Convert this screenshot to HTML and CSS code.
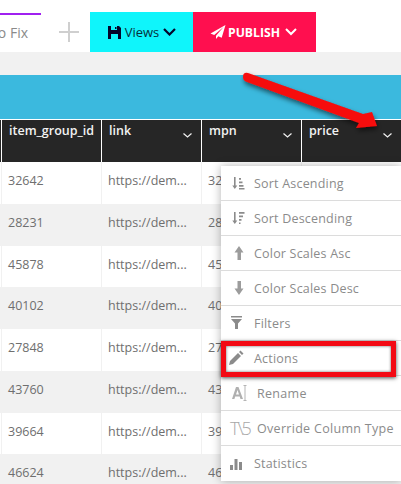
FILE: index.html
```html
<!DOCTYPE html>
<html lang="en">
<head>
    <meta charset="UTF-8">
    <meta name="viewport" content="width=device-width, initial-scale=1.0">
    <title>Feed columns</title>
    <link rel="stylesheet" href="styles.css">
</head>
<body>
    <div class="topbar">
        <div class="tab"><span>Auto Fix</span></div>
        <div class="add-tab"></div>
        <button class="btn btn-views">
            <svg width="13" height="13" viewBox="0 0 13 13"><path fill="#05052a" d="M0 0h11l2 2v11H0z"/><path fill="#0ff5fb" d="M3 0h6v4H3zM3 8h7v5H3z"/><path fill="#05052a" d="M7 1h1.500v2H7z"/></svg>
            <span>Views</span>
            <svg width="13" height="8" viewBox="0 0 13 8"><path fill="none" stroke="#05052a" stroke-width="2.200" d="M1 1l5.500 5.500L12 1"/></svg>
        </button>
        <button class="btn btn-publish">
            <svg width="16" height="14" viewBox="0 0 15 14"><path fill="#fff" d="M15 0L0 8.500l3.700 1.400L13 2 5.500 10.700V14l2.300-2.700 3.400 1.400z"/></svg>
            <span>PUBLISH</span>
            <svg width="12" height="8" viewBox="0 0 12 8"><path fill="none" stroke="#fff" stroke-width="2" d="M1 1l5 5 5-5"/></svg>
        </button>
    </div>
    <div class="greybar"></div>
    <div class="bluebar"></div>

    <div class="table">
        <div class="row head">
            <div class="sliver"></div>
            <div class="th">item_group_id</div>
            <div class="th">link<svg class="caret" width="9" height="5" viewBox="0 0 9 5"><path d="M.5.500L4.500 4 8.500.500"/></svg></div>
            <div class="th">mpn<svg class="caret" width="9" height="5" viewBox="0 0 9 5"><path d="M.5.500L4.500 4 8.500.500"/></svg></div>
            <div class="th">price<svg class="caret" width="9" height="5" viewBox="0 0 9 5"><path d="M.5.500L4.500 4 8.500.500"/></svg></div>
        </div>
        <div class="row"><div class="sliver"></div><div class="td">32642</div><div class="td">https://dem...</div><div class="td">32642</div><div class="td"></div></div>
        <div class="row"><div class="sliver"></div><div class="td">28231</div><div class="td">https://dem...</div><div class="td">28231</div><div class="td"></div></div>
        <div class="row"><div class="sliver"></div><div class="td">45878</div><div class="td">https://dem...</div><div class="td">45878</div><div class="td"></div></div>
        <div class="row"><div class="sliver"></div><div class="td">40102</div><div class="td">https://dem...</div><div class="td">40102</div><div class="td"></div></div>
        <div class="row"><div class="sliver"></div><div class="td">27848</div><div class="td">https://dem...</div><div class="td">27848</div><div class="td"></div></div>
        <div class="row"><div class="sliver"></div><div class="td">43760</div><div class="td">https://dem...</div><div class="td">43760</div><div class="td"></div></div>
        <div class="row"><div class="sliver"></div><div class="td">39664</div><div class="td">https://dem...</div><div class="td">39664</div><div class="td"></div></div>
        <div class="row"><div class="sliver"></div><div class="td">46624</div><div class="td">https://dem...</div><div class="td">46624</div><div class="td"></div></div>
    </div>

    <div class="menu">
        <div class="item">
            <svg class="icon" width="16" height="16" viewBox="0 0 16 16"><path d="M4 2h1.600v8.500h1.700L4.800 14 2.300 10.500H4zM9 3h2v1.800H9zM9 6.500h3.500v1.800H9zM9 10h4.500v1.800H9zM9 13h5.500v1.400H9z"/></svg>
            <span>Sort Ascending</span>
        </div>
        <div class="item">
            <svg class="icon" width="16" height="16" viewBox="0 0 16 16"><path d="M4 2h1.600v8.500h1.700L4.800 14 2.300 10.500H4zM9 2h5.500v1.800H9zM9 5.500h4v1.800H9zM9 9h2.500v1.800H9zM9 12.500h1.500v1.500H9z"/></svg>
            <span>Sort Descending</span>
        </div>
        <div class="item">
            <svg class="icon icon-soft" width="16" height="16" viewBox="0 0 16 16"><path d="M9 1l4.500 6.500H11V15H7.500V7.500h-3z"/></svg>
            <span>Color Scales Asc</span>
        </div>
        <div class="item">
            <svg class="icon icon-soft" width="16" height="16" viewBox="0 0 16 16"><path d="M7.500 1H11v7.500h2.500L9 15 4.500 8.500h3z"/></svg>
            <span>Color Scales Desc</span>
        </div>
        <div class="item">
            <svg class="icon" width="16" height="16" viewBox="0 0 16 16"><path d="M1 1h11v1.500H1zM1 4h11L8 8.500V14H5V8.500z"/></svg>
            <span>Filters</span>
        </div>
        <div class="item">
            <svg class="icon icon-pencil" width="16" height="16" viewBox="0 0 16 16"><path d="M1 15l1-4 8-8 3 3-8 8zM11 2l1.500-1.500 3 3L14 5z"/></svg>
            <span>Actions</span>
            <div class="highlight"></div>
        </div>
        <div class="item item-wide">
            <svg class="icon icon-rename" width="19" height="18" viewBox="0 0 19 18"><path d="M6 3h2.500L13 15h-2.500l-.8-2.500H5.200L4.400 15H2zM6 10.500h3L7.500 6z"/><path fill="none" stroke="#b5b5b5" d="M13.500 1.500h3M15 1.500v15M13.500 16.500h3"/></svg>
            <span>Rename</span>
        </div>
        <div class="item item-wide">
            <span class="type-icon">T\5</span>
            <span>Override Column Type</span>
        </div>
        <div class="item">
            <svg class="icon" width="16" height="16" viewBox="0 0 16 16"><path d="M0 9h3v5H0zM4.500 3h3v11h-3zM9 6h3v8H9z"/></svg>
            <span>Statistics</span>
        </div>
    </div>

    <svg class="arrow" width="150" height="70" viewBox="0 0 150 70">
        <defs>
            <filter id="soft" x="-10%" y="-30%" width="125%" height="170%">
                <feDropShadow dx="1" dy="3" stdDeviation="2.500" flood-color="#000" flood-opacity=".55"/>
            </filter>
        </defs>
        <path filter="url(#soft)" fill="#f60b0b" d="M3 6Q3 1 8 2L123 43 132 41 137 55 116 57 119 52 7 11Q3 10 3 6z"/>
    </svg>
</body>
</html>
```

FILE: styles.css
```css
* {
    box-sizing: border-box;
}
html, body {
    height: 100%;
}
body {
    margin: 0;
    overflow: hidden;
    position: relative;
    background: #fff;
    font-family: "Open Sans", sans-serif;
    color: #6f6f6f;
}
.topbar {
    height: 52px;
    padding-top: 12px;
    display: flex;
    align-items: stretch;
    background: #fff;
}
.tab {
    width: 41px;
    height: 40px;
    margin-top: 1px;
    border-top: 2px solid #a020f0;
    display: flex;
    justify-content: flex-end;
    padding: 8px 13px 0 0;
    font-size: 14px;
    color: #8a8a8a;
    white-space: nowrap;
}
.add-tab {
    width: 20px;
    height: 20px;
    margin: 10px 11px 0 18px;
    background:
        linear-gradient(#cfcfcf, #cfcfcf) center / 100% 2px no-repeat,
        linear-gradient(#cfcfcf, #cfcfcf) center / 2px 100% no-repeat;
}
.btn {
    border: none;
    padding: 0;
    display: flex;
    align-items: center;
    justify-content: center;
    font-family: "Open Sans", sans-serif;
}
.btn-views {
    width: 103px;
    padding-left: 1px;
    gap: 4px;
    background: #0ff5fb;
    color: #05303a;
    font-size: 13px;
}
.btn-publish {
    width: 123px;
    padding-right: 2px;
    gap: 2px;
    background: #ff0f4f;
    color: #fff;
    font-size: 12.200px;
    font-weight: 700;
}
.btn-publish span {
    margin-right: 3px;
}
.greybar {
    height: 23px;
    background: #f1f1f1;
}
.bluebar {
    height: 45px;
    background: #3bb9de;
    border-bottom: 1px solid #fff;
}
.table {
    display: flex;
    flex-direction: column;
}
.row {
    display: grid;
    grid-template-columns: 1px repeat(4, 100px);
    height: 41.750px;
    background: #fff;
}
.row:nth-child(odd) {
    background: #f1f1f1;
}
.row.head {
    height: 43px;
    background: #262626;
    margin-top: -1px;
    border-top: 1px solid #fff;
}
.sliver {
    background: transparent;
}
.head .sliver {
    background: #262626;
}
.th {
    position: relative;
    border-left: 1px solid #fff;
    padding: 1px 0 0 7px;
    font-size: 12.500px;
    line-height: 19px;
    font-weight: 600;
    color: #f2f2f2;
    white-space: nowrap;
    overflow: hidden;
}
.caret {
    position: absolute;
    right: 9px;
    top: 13px;
    fill: none;
    stroke: #f2f2f2;
    stroke-width: 1.200;
}
.td {
    border-left: 1px solid #f1f1f1;
    padding: 10px 0 0 6px;
    font-size: 12.500px;
    line-height: 18px;
    color: #6f6f6f;
    white-space: nowrap;
    overflow: hidden;
}
.menu {
    position: absolute;
    left: 221px;
    top: 166px;
    width: 180px;
    background: #fff;
    box-shadow: 0 0 9px rgba(0, 0, 0, .3);
}
.item {
    position: relative;
    height: 35px;
    padding-left: 9px;
    display: flex;
    align-items: center;
    gap: 8px;
    border-bottom: 1px solid #dcdcdc;
    font-size: 12.500px;
    letter-spacing: .2px;
    color: #8b8b8b;
    white-space: nowrap;
}
.item:last-child {
    border-bottom: none;
}
.item-wide {
    gap: 8px;
    letter-spacing: .3px;
}
.icon {
    flex: none;
    fill: #8b8b8b;
}
.icon-soft {
    fill: #9c9c9c;
}
.icon-pencil {
    margin-left: -2px;
    margin-right: 2px;
}
.icon-rename {
    fill: #b0b0b0;
}
.type-icon {
    flex: none;
    width: 19px;
    font-size: 18px;
    font-weight: 300;
    letter-spacing: -2px;
    color: #a8a8a8;
}
.highlight {
    position: absolute;
    left: 0;
    top: 0;
    width: 175px;
    height: 36px;
    border: 5px solid #f30a14;
    box-shadow: 0 1px 4px rgba(0, 0, 0, .7), inset 0 0 3px rgba(0, 0, 0, .6);
}
.arrow {
    position: absolute;
    left: 240px;
    top: 71px;
}
```
